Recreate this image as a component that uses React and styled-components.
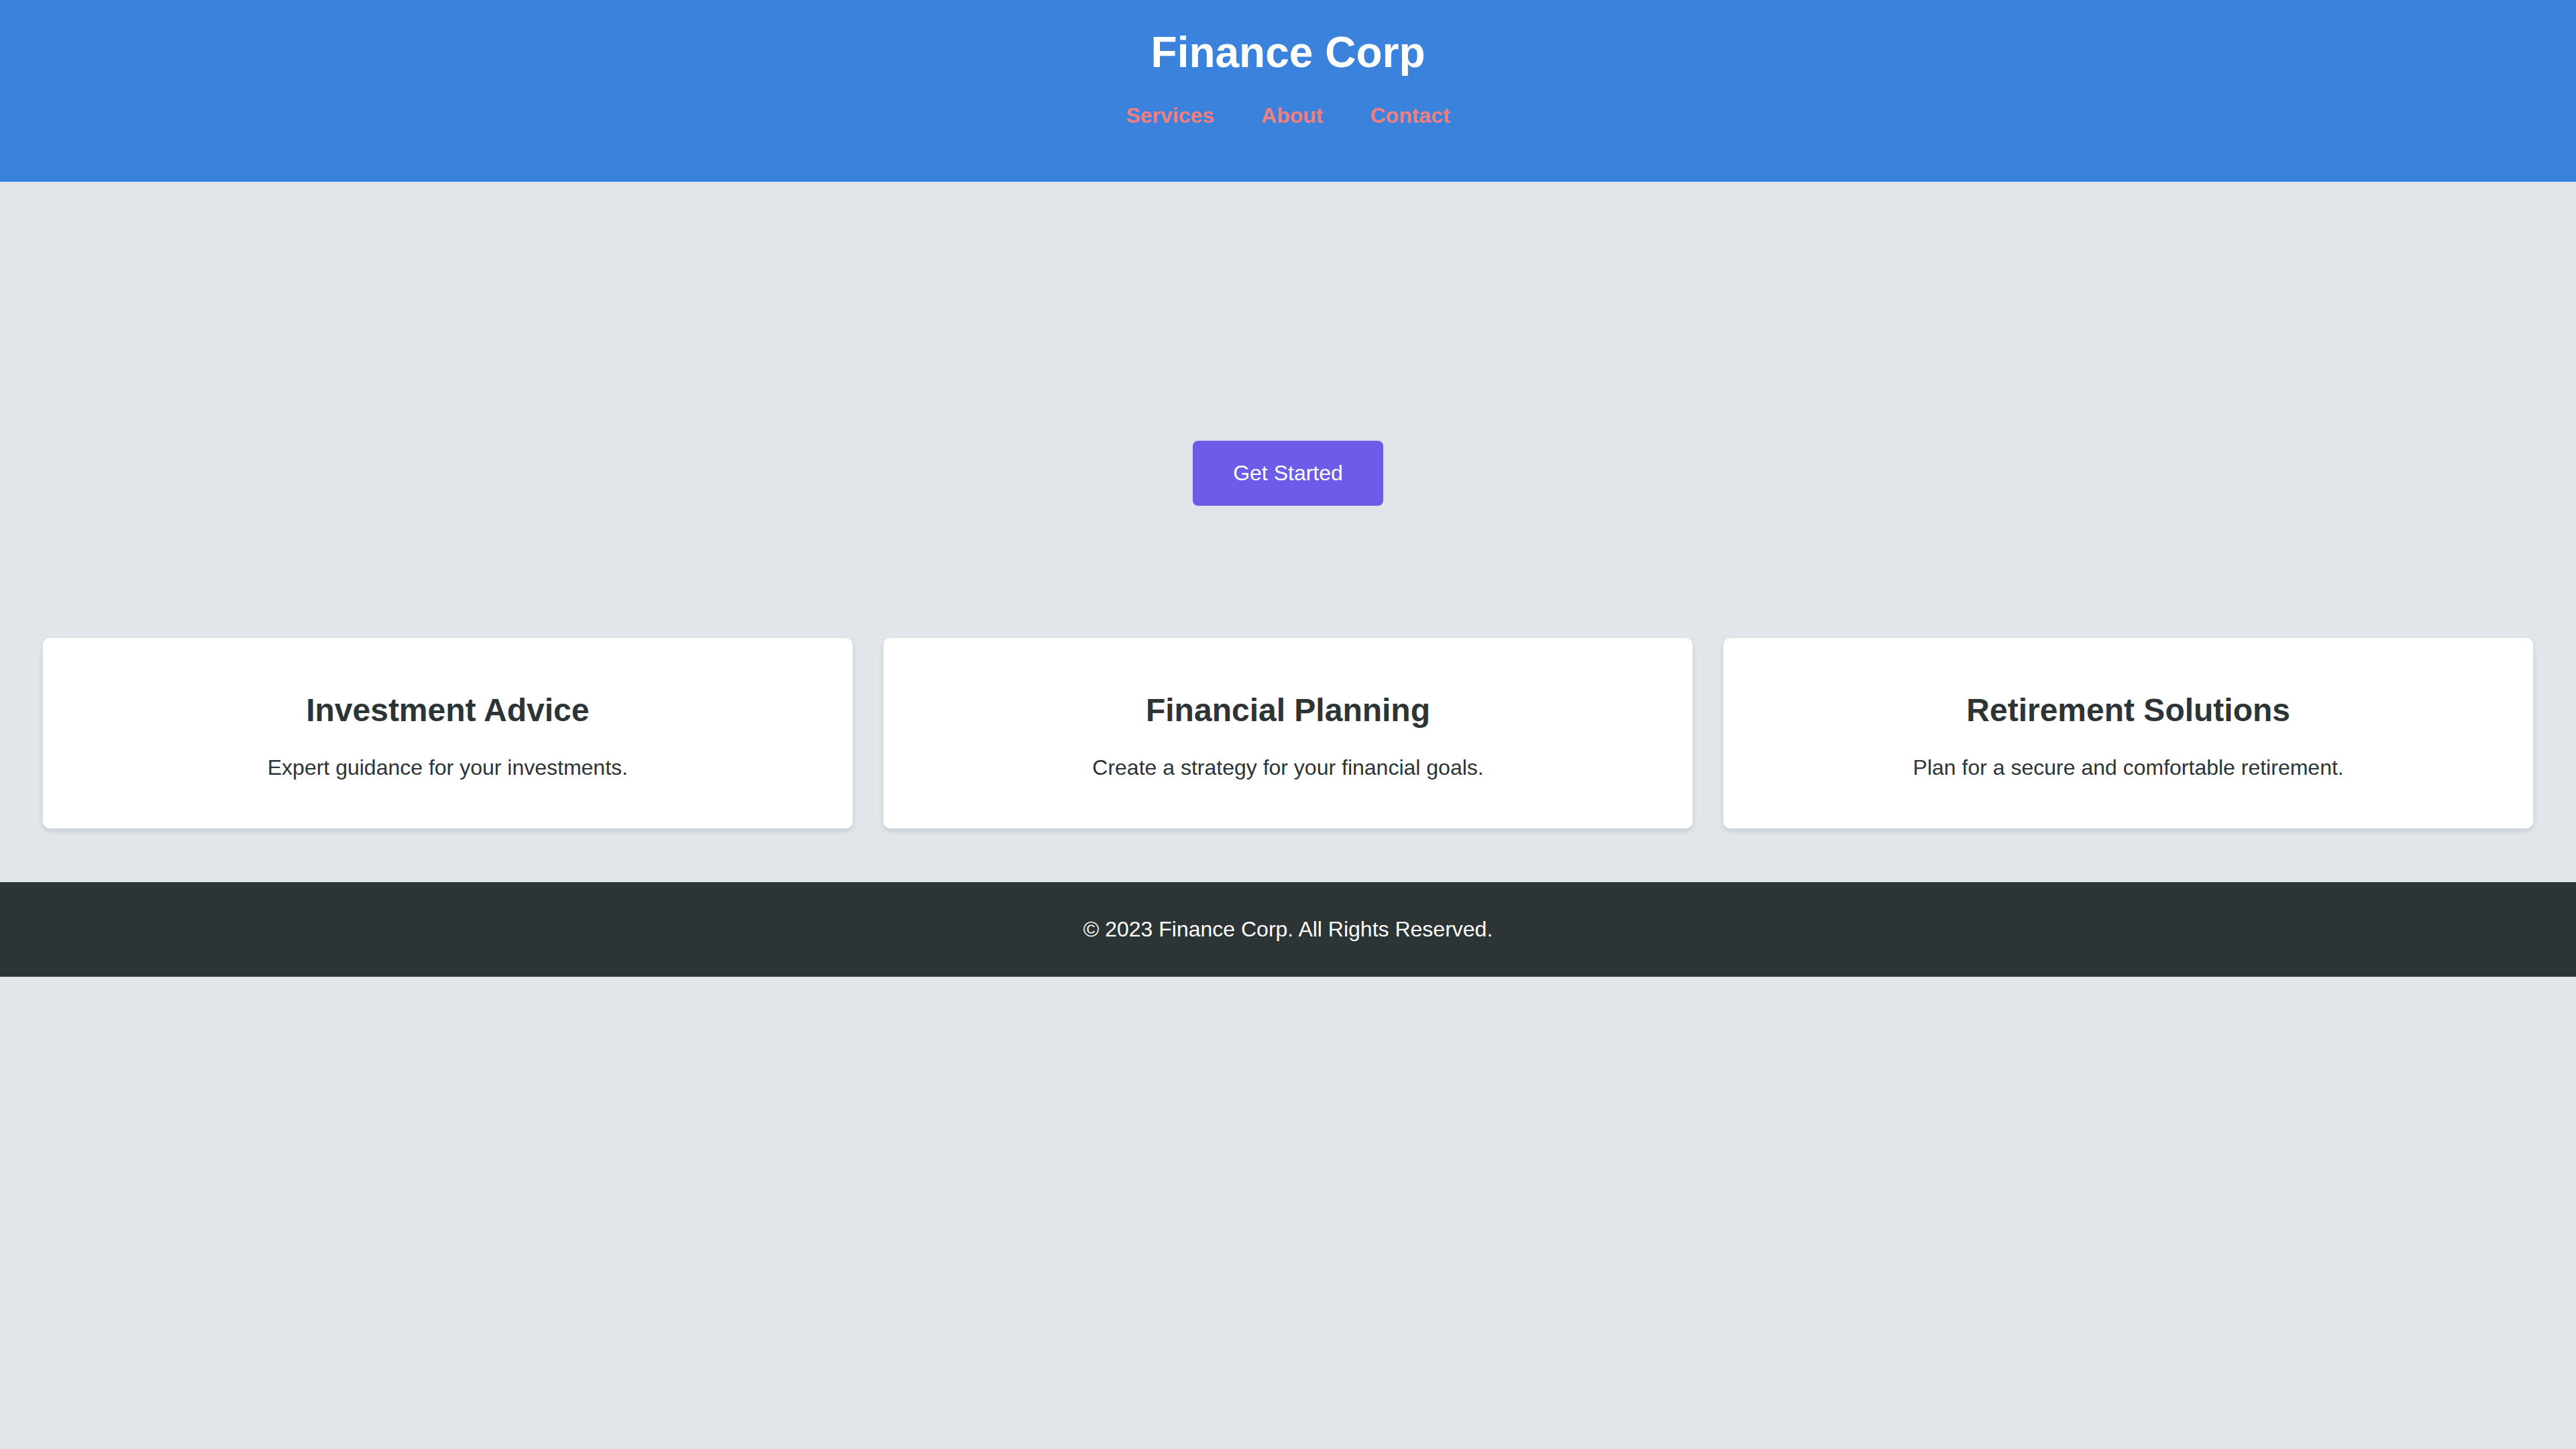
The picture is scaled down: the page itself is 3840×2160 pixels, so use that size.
import React from 'react'
import styled, { createGlobalStyle } from 'styled-components'

const GlobalStyle = createGlobalStyle`
  html, body {
    margin: 0;
    padding: 0;
    background: #e0e6ea;
    font-family: 'Liberation Sans', Arial, Helvetica, sans-serif;
    font-size: 32px;
    color: #2d3436;
  }
  * {
    box-sizing: border-box;
  }
`

const Page = styled.div`
  min-height: 2160px;
  background: #e0e6ea;
`

const Header = styled.header`
  background: #3b82dc;
  padding: 41px 0 80px;
  text-align: center;
`

const Title = styled.h1`
  margin: 0 0 39px;
  font-size: 64px;
  font-weight: 700;
  color: #ffffff;
`

const Nav = styled.nav`
  display: flex;
  justify-content: center;
  gap: 70px;
`

const NavLink = styled.a`
  color: #f08080;
  font-weight: 700;
  font-size: 32px;
  text-decoration: none;
`

const Hero = styled.section`
  display: flex;
  justify-content: center;
  padding: 386px 0 117px;
`

const Button = styled.button`
  background: #6c5ce7;
  color: #ffffff;
  border: none;
  border-radius: 8px;
  padding: 30px 60px;
  font-family: inherit;
  font-size: 32px;
  line-height: normal;
  cursor: pointer;
`

const Services = styled.section`
  display: grid;
  grid-template-columns: repeat(3, 1fr);
  gap: 46px;
  padding: 80px 64px;
`

const Card = styled.div`
  background: #ffffff;
  border-radius: 10px;
  box-shadow: 0 4px 8px rgba(0, 0, 0, 0.12);
  padding: 40px;
  text-align: center;

  & h2 {
    margin: 40px 0;
    font-size: 48px;
    font-weight: 700;
    color: #2d3436;
  }

  & p {
    margin: 32px 0;
    font-size: 32px;
    color: #2d3436;
  }
`

const Footer = styled.footer`
  background: #2d3436;
  color: #ffffff;
  text-align: center;
  padding: 52px 0;

  & p {
    margin: 0;
    font-size: 32px;
  }
`

const services = [
  { title: 'Investment Advice', text: 'Expert guidance for your investments.' },
  { title: 'Financial Planning', text: 'Create a strategy for your financial goals.' },
  { title: 'Retirement Solutions', text: 'Plan for a secure and comfortable retirement.' },
]

export default function App() {
  return (
    <Page>
      <GlobalStyle />
      <Header>
        <Title>Finance Corp</Title>
        <Nav>
          <NavLink href="#services">Services</NavLink>
          <NavLink href="#about">About</NavLink>
          <NavLink href="#contact">Contact</NavLink>
        </Nav>
      </Header>
      <Hero>
        <Button>Get Started</Button>
      </Hero>
      <Services id="services">
        {services.map((s) => (
          <Card key={s.title}>
            <h2>{s.title}</h2>
            <p>{s.text}</p>
          </Card>
        ))}
      </Services>
      <Footer>
        <p>© 2023 Finance Corp. All Rights Reserved.</p>
      </Footer>
    </Page>
  )
}
